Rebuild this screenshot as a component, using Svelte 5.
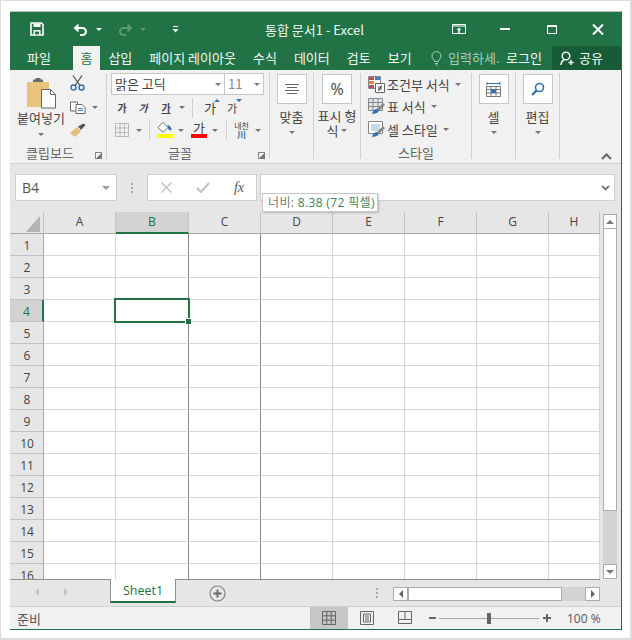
<script>
  const tabs = ['삽입', '페이지 레이아웃', '수식', '데이터', '검토', '보기'];
  const cols = [
    { n: 'A', w: 72 }, { n: 'B', w: 73, sel: true, dark: true }, { n: 'C', w: 72, dark: true },
    { n: 'D', w: 72 }, { n: 'E', w: 72 }, { n: 'F', w: 72 }, { n: 'G', w: 72 }, { n: 'H', w: 51 }
  ];
  const rows = Array.from({ length: 16 }, (_, i) => i + 1);
</script>

<div class="page">
  <div class="win">
    <header class="title">
      <svg class="save" width="14" height="14" viewBox="0 0 14 14"><path d="M1 1h10.5L13 2.5V13H1z" fill="none" stroke="#fff" stroke-width="1.6"/><path d="M3.5 1.5h7v3.5h-7zM3.5 8h7v5h-7z" fill="#fff"/><path d="M5 9.5h4v3H5z" fill="#217346"/></svg>
      <svg class="undo" width="15" height="13" viewBox="0 0 15 13"><path d="M2 5h7.5a3.4 3.4 0 0 1 0 7H7" fill="none" stroke="#fff" stroke-width="2"/><path d="M5.5 0.5v9L0.5 5z" fill="#fff"/></svg>
      <i class="caret w"></i>
      <svg class="redo" width="15" height="13" viewBox="0 0 15 13"><path d="M13 5H5.5a3.4 3.4 0 0 0 0 7H8" fill="none" stroke="#5b9a77" stroke-width="2"/><path d="M9.5 0.5v9L14.5 5z" fill="#5b9a77"/></svg>
      <i class="caret dim"></i>
      <svg class="qat" width="7" height="8" viewBox="0 0 7 8"><path d="M1 1h5v1H1z" fill="#fff"/><path d="M0.5 4h6L3.5 7.5z" fill="#fff"/></svg>
      <span class="doc">통합 문서1 - Excel</span>
      <svg class="disp" width="14" height="10" viewBox="0 0 14 10"><path d="M.5.5h13v9H.5z" fill="none" stroke="#fff"/><path d="M1 2h12" stroke="#fff"/><path d="M7 3.5l2.5 2.5h-1.7v3H6.2V6H4.500z" fill="#fff"/></svg>
      <span class="min"></span>
      <span class="max"></span>
      <svg class="close" width="12" height="11" viewBox="0 0 12 11"><path d="M1 .5l10 10M11 .5l-10 10" stroke="#fff" stroke-width="2"/></svg>
    </header>

    <nav class="tabs">
      <span class="tab file">파일</span>
      <span class="tab on">홈</span>
      {#each tabs as t}
        <span class="tab">{t}</span>
      {/each}
      <span class="tell">
        <svg width="11" height="15" viewBox="0 0 11 15"><path d="M3.500 10.500C3 8 1 7.500 1 5a4.500 4.500 0 0 1 9 0c0 2.500-2 3-2.500 5.500zM4 12.500h3M4.500 14h2" fill="none" stroke="#a9cdb8" stroke-width="1"/></svg>
        <span>입력하세.</span>
      </span>
      <span class="login">로그인</span>
      <span class="share">
        <svg width="14" height="15" viewBox="0 0 14 15"><circle cx="6" cy="5" r="3.800" fill="none" stroke="#fff" stroke-width="1.400"/><path d="M1 14c0-3 1.500-4.500 3-5.200M11 9v5M8.500 11.500h5" fill="none" stroke="#fff" stroke-width="1.400"/></svg>
        <span>공유</span>
      </span>
    </nav>

    <section class="ribbon">
      <div class="grp clip">
        <div class="body">
          <div class="paste">
            <svg width="30" height="31" viewBox="0 0 30 31">
              <path d="M0 4h22v25H0z" fill="#e9c27c"/>
              <path d="M6 4h10V1.500h-2.500V0h-5v1.500H6z" fill="#6b6b6b"/>
              <path d="M14.500 11.500h9l5 5V30h-14z" fill="#fff" stroke="#666"/>
              <path d="M23.500 11.500v5h5" fill="none" stroke="#666"/>
            </svg>
            <span class="lbl">붙여넣기</span>
            <i class="caret"></i>
          </div>
          <div class="clip-small">
            <svg width="15" height="16" viewBox="0 0 15 16"><path d="M3 .5l7 10M12 .5l-7 10" stroke="#555" stroke-width="1.300"/><circle cx="3.500" cy="12.500" r="2.500" fill="none" stroke="#2f6ea8" stroke-width="1.400"/><circle cx="11.500" cy="12.500" r="2.500" fill="none" stroke="#2f6ea8" stroke-width="1.400"/></svg>
            <span class="copy">
              <svg width="16" height="13" viewBox="0 0 16 13"><path d="M.5 1h7v9h-7z" fill="#fff" stroke="#666"/><path d="M6 3.500h6l3 3v6H6z" fill="#fff" stroke="#666"/><path d="M8 7.500h5M8 9.500h5" stroke="#3c78b0"/></svg>
              <i class="caret"></i>
            </span>
            <svg class="brush" width="16" height="15" viewBox="0 0 16 15"><path d="M0 10l7-6 4 4.500L5 14z" fill="#e3bd7b"/><path d="M8 3.500l3 3.500 4.500-5L13.500.5z" fill="#555"/></svg>
          </div>
        </div>
        <div class="foot">클립보드<span class="launch"></span></div>
      </div>

      <div class="grp font">
        <div class="body col">
          <div class="combo">
            <span class="fname">맑은 고딕<i class="caret"></i></span>
            <span class="fsize">11<i class="caret"></i></span>
          </div>
          <div class="frow r2">
            <b class="k">가</b>
            <b class="k it">가</b>
            <b class="k un">가</b>
            <i class="caret"></i>
            <span class="vsep"></span>
            <span class="k big up">가</span>
            <span class="k big2 down">가</span>
          </div>
          <div class="frow r3">
            <svg width="14" height="14" viewBox="0 0 14 14"><path d="M.5.500h13v13H.5zM.5 5h13M.5 9.500h13M5 .5v13M9.500 .5v13" fill="none" stroke="#888" stroke-dasharray="1 1"/></svg>
            <i class="caret c-border"></i>
            <span class="vsep"></span>
            <span class="fill">
              <svg width="16" height="11" viewBox="0 0 17 11"><path d="M1 5.500L6.500 0l5 5.500-5 5z" fill="#fff" stroke="#666"/><path d="M11 3c2 0 4.500 2 4.500 5-1.500 1-3 .5-4-2z" fill="#2e75b5"/></svg>
              <span class="bar yellow"></span>
            </span>
            <i class="caret c-fill"></i>
            <span class="color">
              <span class="k2">가</span>
              <span class="bar red"></span>
            </span>
            <i class="caret c-color"></i>
            <span class="vsep s-ruby"></span>
            <span class="ruby"><span>내천</span><em>川</em></span>
            <i class="caret c-ruby"></i>
          </div>
        </div>
        <div class="foot">글꼴<span class="launch"></span></div>
      </div>

      <div class="grp one align">
        <div class="bigbtn">
          <svg width="14" height="10" viewBox="0 0 14 10"><path d="M0 .5h14M2 3.500h10M0 6.500h14M2 9.500h10" stroke="#666"/></svg>
        </div>
        <span class="lbl">맞춤</span>
        <i class="caret"></i>
      </div>

      <div class="grp one num">
        <div class="bigbtn pct">%</div>
        <span class="lbl">표시 형</span>
        <span class="lbl">식 <i class="caret"></i></span>
      </div>

      <div class="grp style">
        <div class="body col">
          <div class="srow">
            <svg width="17" height="17" viewBox="0 0 17 17"><path d="M.5.500h12v12H.5z" fill="#fff" stroke="#888"/><path d="M1 1h5v3H1z" fill="#c0504d"/><path d="M1 5h5v3H1z" fill="#e97f3c"/><path d="M1 9h5v3H1z" fill="#c0504d"/><path d="M7 1h5v3H7z" fill="#4a7ebb"/><path d="M7.500 7.500h9v9h-9z" fill="#fff" stroke="#666"/><path d="M10 11h4M10 13h4M13.500 9.500l-3 5.500" stroke="#444"/></svg>
            <span>조건부 서식</span><i class="caret"></i>
          </div>
          <div class="srow">
            <svg width="17" height="17" viewBox="0 0 17 17"><path d="M.5.500h14v12H.5zM.5 4.500h14M.5 8.500h14M5 .5v12M10 .5v12" fill="#dfe6ee" stroke="#888"/><path d="M9 11l6-6 2 2-6 6z" fill="#888"/><path d="M4 16c1-4 3-5 5-5l2 2c-1 2-4 3-7 3z" fill="#2e75b5"/></svg>
            <span>표 서식</span><i class="caret"></i>
          </div>
          <div class="srow">
            <svg width="17" height="17" viewBox="0 0 17 17"><path d="M.5.500h14v12H.5z" fill="#fff" stroke="#888"/><path d="M3 3h9v7H3z" fill="#c9d6e3"/><path d="M9 11l6-6 2 2-6 6z" fill="#888"/><path d="M4 16c1-4 3-5 5-5l2 2c-1 2-4 3-7 3z" fill="#2e75b5"/></svg>
            <span>셀 스타일</span><i class="caret"></i>
          </div>
        </div>
        <div class="foot">스타일</div>
      </div>

      <div class="grp one cell">
        <div class="bigbtn">
          <svg width="15" height="17" viewBox="0 0 15 17"><path d="M1 1v3M14 1v3M1 2.500h13" stroke="#2e75b5"/><path d="M.5 5.500h14v10H.5zM.5 8.500h14M.5 12h14M5 5.500v10M10 5.500v10" fill="#fff" stroke="#777"/><path d="M5 8.500h5V12H5z" fill="#2e75b5"/></svg>
        </div>
        <span class="lbl">셀</span>
        <i class="caret"></i>
      </div>

      <div class="grp one edit">
        <div class="bigbtn">
          <svg width="14" height="14" viewBox="0 0 14 14"><circle cx="8.500" cy="5.500" r="4" fill="none" stroke="#2e75b5" stroke-width="1.600"/><path d="M5.500 8.500L1 13" stroke="#2e75b5" stroke-width="2.400"/></svg>
        </div>
        <span class="lbl">편집</span>
        <i class="caret"></i>
      </div>

      <div class="collapse">
        <svg width="11" height="7" viewBox="0 0 11 7"><path d="M1 6l4.500-4.500L10 6" fill="none" stroke="#666" stroke-width="2"/></svg>
      </div>
    </section>

    <section class="formula">
      <div class="namebox"><span>B4</span><i class="caret lg"></i></div>
      <span class="dots v"></span>
      <div class="fbtns">
        <svg width="11" height="11" viewBox="0 0 11 11"><path d="M.5.500l10 10M10.500 .5l-10 10" stroke="#c2c2c2" stroke-width="1.500"/></svg>
        <svg width="14" height="11" viewBox="0 0 14 11"><path d="M1 6l4 4 8-9" fill="none" stroke="#c2c2c2" stroke-width="2"/></svg>
        <span class="fx">fx</span>
      </div>
      <div class="finput">
        <svg width="9" height="6" viewBox="0 0 9 6"><path d="M1 1l3.500 3.500L8 1" fill="none" stroke="#777" stroke-width="1.800"/></svg>
      </div>
    </section>

    <section class="sheet">
      <div class="gridwrap">
        <div class="hdr">
          <div class="corner"><span></span></div>
          {#each cols as c}
            <div class="colh" class:sel={c.sel} style="width:{c.w}px">{c.n}</div>
          {/each}
        </div>
        <div class="rows">
          {#each rows as r}
            <div class="row">
              <div class="rowh" class:sel={r === 4}>{r}</div>
              {#each cols as c}
                <div class="cell-c" class:dark={c.dark} style="width:{c.w}px"></div>
              {/each}
            </div>
          {/each}
          <div class="cursor"></div>
        </div>
      </div>
      <div class="vscroll">
        <span class="sbtn"><i class="tri up"></i></span>
        <span class="vthumb"></span>
        <span class="vtrack"></span>
        <span class="sbtn"><i class="tri"></i></span>
      </div>
      <div class="tip"><span class="tip-k">너비:</span> 8.38 (72 픽셀)</div>
    </section>

    <section class="tabbar">
      <i class="nav l"></i>
      <i class="nav r"></i>
      <span class="stab">Sheet1</span>
      <svg class="plus" width="17" height="17" viewBox="0 0 17 17"><circle cx="8.500" cy="8.500" r="7.500" fill="none" stroke="#858585" stroke-width="1.200"/><path d="M8.500 4.500v8M4.500 8.500h8" stroke="#666" stroke-width="1.800"/></svg>
      <span class="dots h"></span>
      <div class="hscroll">
        <span class="sbtn2"><i class="tri2 left"></i></span>
        <span class="hthumb"></span>
        <span class="htrack"></span>
        <span class="sbtn2"><i class="tri2 right"></i></span>
      </div>
    </section>

    <footer class="status">
      <span class="ready">준비</span>
      <div class="views">
        <span class="view active">
          <svg width="14" height="14" viewBox="0 0 14 14"><path d="M.5.500h13v13H.5zM.5 4.800h13M.5 9.200h13M4.800 .5v13M9.200 .5v13" fill="none" stroke="#666"/></svg>
        </span>
        <span class="view">
          <svg width="14" height="14" viewBox="0 0 14 14"><path d="M.5.500h13v13H.5z" fill="none" stroke="#666"/><path d="M3.500 3h7v8h-7zM5 5h4M5 7h4M5 9h4" fill="none" stroke="#666"/></svg>
        </span>
        <span class="view">
          <svg width="14" height="14" viewBox="0 0 14 14"><path d="M.5.500h13v12H.5zM.5 8.500h13M7 .5v8" fill="none" stroke="#666"/></svg>
        </span>
      </div>
      <span class="zm minus"></span>
      <span class="slider"><span class="knob"></span></span>
      <span class="zm plus2"></span>
      <span class="pctv">100 %</span>
    </footer>
  </div>
</div>

<style>
  :global(body) {
    margin: 0;
    background: #fff;
  }
  .page {
    box-sizing: border-box;
    width: 632px;
    height: 640px;
    padding: 10px 8px 8px 9px;
    border: solid #dcdcdc;
    border-width: 1px 2px 2px 1px;
    background: #fff;
    font-family: "Noto Sans CJK KR", "Open Sans", sans-serif;
    font-size: 13px;
    color: #444;
  }
  .win {
    box-sizing: border-box;
    width: 612px;
    height: 619px;
    border-top: 1px solid #b9c4bd;
    border-right: 1px solid #217346;
    border-bottom: 1px solid #217346;
    display: flex;
    flex-direction: column;
    position: relative;
  }
  i { display: block; font-style: normal; }
  .caret {
    width: 0;
    height: 0;
    flex: none;
    border: 3px solid transparent;
    border-bottom: 0;
    border-top-color: #777;
  }
  .caret.w { border-top-color: #fff; margin-left: 8px; }
  .caret.dim { border-top-color: #5b9a77; margin-left: 7px; }

  /* title bar */
  .title {
    height: 34px;
    flex: none;
    background: #217346;
    color: #fff;
    display: flex;
    align-items: center;
    position: relative;
  }
  .save { margin-left: 20px; }
  .undo { margin-left: 29px; }
  .redo { margin-left: 16px; }
  .qat { margin-left: 26px; }
  .doc {
    position: absolute;
    left: 255px;
    top: 9px;
    line-height: 18px;
    color: #f2f7f4;
  }
  .disp { margin-left: 273px; }
  .min { width: 10px; height: 2px; background: #fff; margin-left: 34px; }
  .max { box-sizing: border-box; width: 10px; height: 9px; border: 1px solid #fff; border-top-width: 2px; margin-left: 37px; }
  .close { margin-left: 35px; }

  /* tabs */
  .tabs {
    height: 24px;
    flex: none;
    background: #217346;
    color: #f3f8f5;
    display: flex;
    line-height: 24px;
  }
  .tab { padding: 0 8.500px; white-space: nowrap; }
  .file { padding: 0; margin-left: 17px; margin-right: 22px; }
  .tab.on {
    padding: 0 7.500px;
    background: #f1f1f1;
    color: #217346;
  }
  .tell {
    display: flex;
    align-items: center;
    gap: 6px;
    margin-left: 11px;
    color: #a9cdb8;
    width: 72px;
    white-space: nowrap;
    overflow: hidden;
    flex: none;
  }
  .login { margin-left: 3px; white-space: nowrap; }
  .share {
    margin-left: auto;
    width: 69px;
    box-sizing: border-box;
    padding-left: 8px;
    background: #185c37;
    display: flex;
    align-items: center;
    gap: 5px;
    flex: none;
  }

  /* ribbon */
  .ribbon {
    height: 93px;
    flex: none;
    background: #f1f1f1;
    border-bottom: 1px solid #d2d2d2;
    display: flex;
    position: relative;
  }
  .grp {
    box-sizing: border-box;
    height: 86px;
    margin-top: 3px;
    border-right: 1px solid #d0d0d0;
    display: flex;
    flex-direction: column;
    flex: none;
  }
  .body { height: 71px; display: flex; }
  .body.col { flex-direction: column; }
  .foot {
    margin-top: auto;
    height: 14px;
    line-height: 16px;
    text-align: center;
    color: #666;
    position: relative;
  }
  .launch {
    position: absolute;
    right: 4px;
    top: 7px;
    width: 6px;
    height: 6px;
    border-left: 1px solid #888;
    border-top: 1px solid #888;
    background: linear-gradient(135deg, transparent 45%, #777 45%);
  }
  .lbl { line-height: 15px; white-space: nowrap; display: flex; align-items: center; gap: 3px; }
  .clip { width: 97px; }
  .paste {
    width: 50px;
    margin-left: 6px;
    display: flex;
    flex-direction: column;
    align-items: center;
    padding-top: 5px;
  }
  .paste svg { margin-left: 1px; margin-bottom: 1px; }
  .paste .caret { margin-top: 8px; }
  .clip-small {
    margin-left: 4px;
    padding-top: 2px;
    display: flex;
    flex-direction: column;
  }
  .copy { display: flex; align-items: center; gap: 6px; margin-top: 10px; }
  .brush { margin-top: 9px; }
  .clip .foot { padding-right: 16px; }

  .font { width: 163px; padding-left: 4px; }
  .font .foot { padding-right: 20px; }
  .combo { display: flex; height: 22px; flex: none; }
  .fname, .fsize {
    box-sizing: border-box;
    background: #fff;
    border: 1px solid #c6c6c6;
    display: flex;
    align-items: center;
    justify-content: space-between;
    padding: 0 3px 0 3px;
    font-size: 13px;
    line-height: 20px;
  }
  .fname { width: 114px; }
  .fsize { width: 40px; margin-left: -1px; color: #888; padding-left: 3px; }
  .frow { display: flex; align-items: center; flex: none; }
  .k { width: 14px; text-align: center; font-size: 10px; line-height: 16px; color: #444; font-weight: 700; }
  .r2 { height: 23px; padding-left: 4px; margin-top: 1px; }
  .r2 .it { margin-left: 7px; font-style: italic; }
  .r2 .un { margin-left: 9px; text-decoration: underline; }
  .r2 .caret { margin-left: 6px; }
  .vsep { width: 1px; height: 20px; background: #d0d0d0; flex: none; }
  .r2 .vsep { margin-left: 7px; }
  .k.big { font-weight: 400; font-size: 13px; margin-left: 10px; position: relative; }
  .k.big2 { font-weight: 400; font-size: 11px; margin-left: 8px; position: relative; }
  .k.up::after, .k.down::after {
    content: "";
    position: absolute;
    right: -3px;
    top: -1px;
    border: 3px solid transparent;
  }
  .k.up::after { border-top: 0; border-bottom-color: #2e75b5; }
  .k.down::after { border-bottom: 0; border-top-color: #2e75b5; }
  .r3 { height: 22px; padding-left: 4px; }
  .c-border { margin-left: 7px; }
  .r3 > .vsep { margin-left: 7px; }
  .fill { margin-left: 7px; display: flex; flex-direction: column; width: 16px; flex: none; }
  .bar { display: block; height: 4px; width: 16px; margin-top: 1px; }
  .yellow { background: #ffff00; }
  .red { background: #f00; margin-top: 0; }
  .c-fill { margin-left: 5px; }
  .color { margin-left: 7px; width: 16px; display: flex; flex-direction: column; flex: none; }
  .k2 { font-size: 13px; line-height: 12px; text-align: center; }
  .c-color { margin-left: 5px; }
  .r3 > .s-ruby { margin-left: 8px; }
  .ruby {
    width: 15px;
    margin-left: 7px;
    display: flex;
    flex-direction: column;
    align-items: center;
    font-size: 8px;
    line-height: 9px;
    color: #444;
    flex: none;
  }
  .ruby span { white-space: nowrap; }
  .ruby em { font-style: normal; font-weight: 700; color: #2e75b5; font-size: 9px; line-height: 9px; }
  .c-ruby { margin-left: 6px; }

  .one { align-items: center; }
  .bigbtn {
    box-sizing: border-box;
    width: 30px;
    height: 30px;
    margin-top: 1px;
    margin-bottom: 5px;
    background: #fff;
    border: 1px solid #c6c6c6;
    display: flex;
    align-items: center;
    justify-content: center;
    flex: none;
  }
  .one > .caret { margin-top: 7px; }
  .align { width: 44px; }
  .num { width: 47px; }
  .num .bigbtn { margin-bottom: 4px; }
  .pct { font-family: "Open Sans", sans-serif; font-size: 16px; color: #444; }
  .style { width: 111px; padding-left: 7px; }
  .style .foot { padding-right: 7px; }
  .srow {
    display: flex;
    align-items: center;
    gap: 2px;
    height: 22.500px;
    white-space: nowrap;
    flex: none;
  }
  .srow .caret { margin-left: 3px; }
  .cell { width: 44px; }
  .edit { width: 44px; }
  .collapse { position: absolute; right: 9px; bottom: 3px; line-height: 0; }

  /* formula bar */
  .formula {
    height: 48px;
    flex: none;
    background: #e6e6e6;
    box-sizing: border-box;
    padding: 10px 0 0 5px;
    display: flex;
    align-items: flex-start;
  }
  .namebox, .fbtns, .finput {
    box-sizing: border-box;
    height: 27px;
    background: #fff;
    border: 1px solid #cfcfcf;
    display: flex;
    align-items: center;
  }
  .namebox {
    width: 102px;
    padding: 0 6px;
    justify-content: space-between;
    font-family: "Open Sans", sans-serif;
    font-size: 14px;
    color: #555;
  }
  .caret.lg { border-width: 4px 4px 0; border-top-color: #999; }
  .dots {
    display: block;
    background: radial-gradient(circle, #a8a8a8 1px, transparent 1.200px);
    flex: none;
  }
  .dots.v { width: 4px; height: 12px; background-size: 4px 4px; margin: 8px 13px 0; }
  .fbtns {
    width: 110px;
    justify-content: space-between;
    padding: 0 12px 0 13px;
  }
  .fx {
    font-family: "Liberation Serif", serif;
    font-style: italic;
    font-size: 14px;
    color: #555;
  }
  .finput {
    width: 355px;
    margin-left: 3px;
    justify-content: flex-end;
    padding-right: 4px;
  }

  /* grid */
  .sheet {
    height: 368px;
    flex: none;
    display: flex;
    background: #e6e6e6;
    position: relative;
  }
  .gridwrap {
    width: 590px;
    overflow: hidden;
    flex: none;
  }
  .hdr { display: flex; height: 22px; }
  .corner {
    box-sizing: border-box;
    width: 34px;
    flex: none;
    padding: 4px 3px 1px 16px;
    border-right: 1px solid #c4c4c4;
    border-bottom: 1px solid #a8a8a8;
  }
  .corner span {
    display: block;
    height: 100%;
    background: #b4b4b4;
    clip-path: polygon(100% 0, 100% 100%, 0 100%);
  }
  .colh {
    box-sizing: border-box;
    flex: none;
    text-align: center;
    line-height: 20px;
    font-family: "Open Sans", sans-serif;
    font-size: 12px;
    color: #444;
    border-right: 1px solid #c4c4c4;
    border-bottom: 1px solid #a8a8a8;
  }
  .colh.sel {
    background: #d2d2d2;
    color: #217346;
    border-bottom: 2px solid #217346;
  }
  .rows {
    position: relative;
    height: 345px;
    overflow: hidden;
    background: #fff;
    border-bottom: 1px solid #8e8e8e;
  }
  .row { display: flex; height: 22px; }
  .rowh {
    box-sizing: border-box;
    width: 34px;
    flex: none;
    background: #e6e6e6;
    border-right: 1px solid #a8a8a8;
    border-bottom: 1px solid #c4c4c4;
    text-align: center;
    line-height: 24px;
    font-family: "Open Sans", sans-serif;
    font-size: 12px;
    color: #444;
    padding-left: 1px;
  }
  .rowh.sel {
    background: #d2d2d2;
    color: #217346;
    border-right: 2px solid #217346;
  }
  .cell-c {
    box-sizing: border-box;
    flex: none;
    background: #fff;
    border-right: 1px solid #d6d6d6;
    border-bottom: 1px solid #d6d6d6;
  }
  .cell-c.dark { border-right-color: #8c8c8c; }
  .cursor {
    position: absolute;
    left: 104px;
    top: 64px;
    width: 76px;
    height: 25px;
    box-sizing: border-box;
    border: 2px solid #217346;
  }
  .cursor::after {
    content: "";
    position: absolute;
    right: -3px;
    bottom: -3px;
    width: 6px;
    height: 6px;
    background: #217346;
    border-left: 1px solid #fff;
    border-top: 1px solid #fff;
    box-sizing: border-box;
  }
  .tip {
    position: absolute;
    left: 252px;
    top: -19px;
    height: 19px;
    width: 116px;
    box-sizing: border-box;
    background: #fff;
    border: 1px solid #c6c6c6;
    box-shadow: 1px 1px 2px rgba(0, 0, 0, .2);
    font-family: "Open Sans", "Noto Sans CJK KR", sans-serif;
    line-height: 17px;
    font-size: 12px;
    letter-spacing: .35px;
    white-space: nowrap;
    padding-left: 5px;
    color: #3f7f60;
  }
  .tip-k { color: #777; }

  /* scrollbars */
  .vscroll {
    width: 14px;
    margin: 2px 0 1px 3px;
    display: flex;
    flex-direction: column;
    flex: none;
    background: #d4d4d4;
  }
  .sbtn {
    box-sizing: border-box;
    height: 15px;
    background: #fff;
    border: 1px solid #ababab;
    display: flex;
    align-items: center;
    justify-content: center;
    flex: none;
  }
  .tri {
    border: 4px solid transparent;
    border-bottom: 0;
    border-top-color: #777;
  }
  .tri.up { border-top: 0; border-bottom: 4px solid #777; }
  .vthumb {
    box-sizing: border-box;
    height: 282px;
    background: #fff;
    border: 1px solid #ababab;
    border-top: 0;
    flex: none;
  }
  .vtrack { flex: 1; }

  /* sheet tabs */
  .tabbar {
    height: 27px;
    flex: none;
    background: #e6e6e6;
    border-bottom: 1px solid #cfcfcf;
    box-sizing: border-box;
    display: flex;
    align-items: flex-start;
  }
  .nav {
    width: 0;
    height: 0;
    border: 4px solid transparent;
    margin-top: 8px;
  }
  .nav.l { margin-left: 25px; border-left: 0; border-right: 4px solid #c4c4c4; }
  .nav.r { margin-left: 25px; border-right: 0; border-left: 4px solid #c4c4c4; }
  .stab {
    box-sizing: border-box;
    width: 66px;
    height: 24px;
    margin-left: 42px;
    margin-top: -1px;
    background: #fff;
    border: solid #8e8e8e;
    border-width: 0 1px;
    border-bottom: 2px solid #217346;
    text-align: center;
    line-height: 24px;
    font-family: "Open Sans", sans-serif;
    font-size: 12.500px;
    color: #217346;
    position: relative;
    z-index: 1;
  }
  .plus { margin: 5px 0 0 33px; }
  .dots.h { width: 4px; height: 12px; background-size: 4px 4px; margin: 7px 0 0 149px; }
  .hscroll {
    display: flex;
    width: 207px;
    height: 14px;
    margin: 7px 0 0 14px;
    background: #d4d4d4;
  }
  .sbtn2 {
    box-sizing: border-box;
    width: 15px;
    background: #fff;
    border: 1px solid #ababab;
    display: flex;
    align-items: center;
    justify-content: center;
    flex: none;
  }
  .tri2 { border: 4px solid transparent; }
  .tri2.left { border-left: 0; border-right-color: #666; }
  .tri2.right { border-right: 0; border-left-color: #666; }
  .hthumb {
    box-sizing: border-box;
    width: 154px;
    background: #fff;
    border: 1px solid #ababab;
    flex: none;
  }
  .htrack { flex: 1; }

  /* status bar */
  .status {
    flex: 1;
    background: #f1f1f1;
    display: flex;
    align-items: center;
    color: #555;
  }
  .ready { margin-left: 7px; width: 293px; flex: none; }
  .views { display: flex; height: 100%; }
  .view {
    width: 38px;
    display: flex;
    align-items: center;
    justify-content: center;
  }
  .view.active { background: #c6c6c6; }
  .zm { display: block; position: relative; background: #666; flex: none; width: 7px; height: 2px; }
  .minus { margin-left: 5px; }
  .plus2 { margin-left: 4px; width: 8px; }
  .plus2::after {
    content: "";
    position: absolute;
    left: 3px;
    top: -3px;
    width: 2px;
    height: 8px;
    background: #666;
  }
  .slider {
    width: 100px;
    height: 1px;
    margin-left: 3px;
    background: #a8a8a8;
    position: relative;
  }
  .knob {
    position: absolute;
    left: 48px;
    top: -5px;
    width: 4px;
    height: 11px;
    background: #666;
  }
  .pctv { margin-left: 16px; font-family: "Open Sans", sans-serif; font-size: 12px; white-space: nowrap; }
</style>
